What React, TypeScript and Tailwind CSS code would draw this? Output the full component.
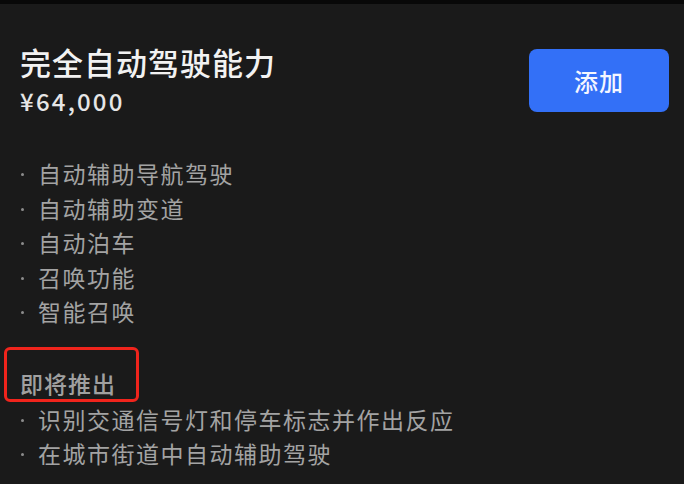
import React from 'react';

const FONT = { fontFamily: '"Noto Sans CJK SC", "Noto Sans", sans-serif' };

const available = ['自动辅助导航驾驶', '自动辅助变道', '自动泊车', '召唤功能', '智能召唤'];
const upcoming = ['识别交通信号灯和停车标志并作出反应', '在城市街道中自动辅助驾驶'];

const Feature: React.FC<{ text: string }> = ({ text }) => (
  <li className="flex items-center h-[34.5px] text-[#a3a3a3] text-[23px] leading-[34px] tracking-[1.5px]">
    <span className="w-[18px] flex justify-start pl-[1px] pt-[3px]">
      <span className="block w-[3px] h-[3px] rounded-full bg-[#8c8c8c]"></span>
    </span>
    <span>{text}</span>
  </li>
);

export default function App() {
  return (
    <div style={FONT} className="w-[684px] h-[484px] overflow-hidden bg-[#1a1a1a] border-t-4 border-[#080808]">
      <div className="flex justify-between items-start pl-5 pr-[15px] pt-[40px]">
        <div>
          <h1 className="text-[#f2f2f2] text-[31px] leading-[36px] font-medium tracking-[1px]">完全自动驾驶能力</h1>
          <p className="mt-[7px] text-[#e6e6e6] text-[24px] leading-[28px] font-medium tracking-[2.2px]">¥64,000</p>
        </div>
        <button className="mt-[5px] w-[140px] h-[63px] rounded-lg bg-[#3370f7] text-[#f4f6ff] text-[24px] font-medium tracking-[1px]">
          添加
        </button>
      </div>

      <ul className="mt-[41px] pl-5">
        {available.map(t => (
          <Feature key={t} text={t} />
        ))}
      </ul>

      <div className="mt-[18px] ml-[4px] inline-block border-[3px] border-[#f0241c] rounded-md pl-[13px] pr-[20px] pt-[20px] pb-[3px]">
        <span className="block text-[#a0a0a0] text-[23px] leading-[26px] font-medium tracking-[1px]">即将推出</span>
      </div>

      <ul className="pl-5">
        {upcoming.map(t => (
          <Feature key={t} text={t} />
        ))}
      </ul>
    </div>
  );
}
